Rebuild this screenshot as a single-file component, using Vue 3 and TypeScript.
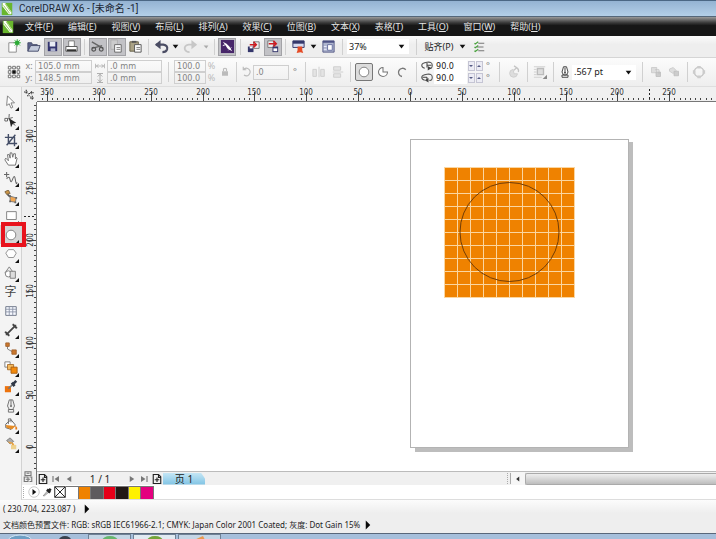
<script setup lang="ts">
import { computed, onMounted, onUnmounted, ref } from 'vue'

const icons: Record<string, string> = {
  logo: '<path d="M0 1h12v14H0z" fill="#69b62d"/><path d="M1 1l3 0 7 10v3H8L1 5z" fill="#fff"/><path d="M2 4l7 9M4 2l6 9" stroke="#8ac34a" stroke-width="1"/>',
  new: '<path d="M3 4h8v10H3z" fill="#fff" stroke="#8b8b8b"/><circle cx="12" cy="4" r="2.500" fill="#2cab35"/><path d="M12 0v8M8 4h8M9 1l6 6M15 1L9 7" stroke="#2cab35" stroke-width=".8"/>',
  open: '<path d="M2 13V4h4l1 2h5v2" fill="#5b628a" stroke="#464c6b"/><path d="M2 13l3-6h10l-2 6z" fill="#c3cadb" stroke="#464c6b"/>',
  save: '<path d="M3 3h10v10H3z" fill="#33356f"/><path d="M5 3h6v5H5z" fill="#e8ecf4"/><path d="M6 10h5v3H6z" fill="#aeb3ce"/>',
  print: '<path d="M5 2h6v7H5z" fill="#fff" stroke="#777"/><path d="M2 8h12v5H2z" fill="#fff" stroke="#555"/><path d="M3 12h10" stroke="#333" stroke-width="2"/>',
  cut: '<path d="M2 3l12 7M2 10l11-3" stroke="#666" stroke-width="1.500"/><circle cx="4" cy="11" r="2" fill="none" stroke="#555" stroke-width="1.300"/><circle cx="12" cy="11" r="2" fill="none" stroke="#555" stroke-width="1.300"/>',
  copy: '<path d="M2 1h7v10H2z" fill="#ccc" stroke="#b0b0b0"/><path d="M6 6h7v8H6z" fill="#fff" stroke="#666"/><path d="M8 9h4M8 11h4" stroke="#777"/>',
  paste: '<path d="M2 3h9v10H2z" fill="#aaa285" stroke="#666047"/><path d="M4 2h5v2H4z" fill="#555"/><path d="M7 6h7v8H7z" fill="#fff" stroke="#555"/><path d="M9 9h4M9 11h4" stroke="#777"/>',
  undo: '<path d="M2 6h8q5 1 4 5-1 3-5 3" fill="none" stroke="#4a4c63" stroke-width="2.200"/><path d="M7 1v10L1 6z" fill="#4a4c63"/>',
  redo: '<path d="M14 6H6q-5 1-4 5 1 3 5 3" fill="none" stroke="#c7c7c7" stroke-width="2"/><path d="M9 1v10l6-5z" fill="#c7c7c7"/>',
  down: '<path d="M5 6h6l-3 4z" fill="#111"/>',
  downGrey: '<path d="M6 7h5l-2 3z" fill="#aaa"/>',
  connect: '<path d="M1 1h14v14H1z" fill="#472669"/><path d="M3 3l4 2 3 3 3 5-5-3-2-3z" fill="#fff"/><path d="M3 7l3-1M9 12l3-3" stroke="#fff"/>',
  import: '<path d="M2 8h6v6H2z" fill="#34366b"/><path d="M4 8h3v2H4z" fill="#fff"/><path d="M8 3h6v7H8z" fill="#eee" stroke="#777"/><path d="M4 6h6M8 3l3 3-3 3" stroke="#cf1b21" stroke-width="1.600" fill="none"/>',
  export: '<path d="M3 2h6v7H3z" fill="#eee" stroke="#777"/><path d="M8 8h6v6H8z" fill="#34366b"/><path d="M9 10h4v3H9z" fill="#fff"/><path d="M4 5h7M9 2l3 3-3 3" stroke="#cf1b21" stroke-width="1.600" fill="none"/>',
  publish: '<path d="M2 2h12v7H2z" fill="#d6daef" stroke="#33376b"/><path d="M2 2h12v3H2z" fill="#33376b"/><path d="M7 8h5v4l1 3-3-1-4 1 1-3z" fill="#e54b25"/>',
  welcome: '<path d="M2 2h12v12H2z" fill="#aeb5ce" stroke="#565b88"/><path d="M2 3h12" stroke="#4b5083" stroke-width="2"/><path d="M7 6h5v6H7z" fill="#fff" stroke="#6970a0"/><path d="M3 8h3M3 11h3" stroke="#eef"/>',
  options: '<path d="M7 3h8M5 8h9M7 13h8" stroke="#777" stroke-width="1.400"/><path d="M2 3l1 1 4-3M2 8l1 1 4-3M2 13l1 1 4-3" fill="none" stroke="#48a23c" stroke-width="1.500"/>',
  origin: '<path d="M3 3h10v10H3z" fill="none" stroke="#777" stroke-dasharray="1 1"/><g fill="#fff" stroke="#666"><path d="M1.500 1.500h3v3h-3zM6.500 1.500h3v3h-3zM11.500 1.500h3v3h-3zM1.500 6.500h3v3h-3zM11.500 6.500h3v3h-3zM1.500 11.500h3v3h-3zM6.500 11.500h3v3h-3zM11.500 11.500h3v3h-3z"/></g><path d="M6 6h4v4H6z" fill="#111"/>',
  width: '<path d="M2 5v6M14 5v6M3 8h10M6 6L3 8l3 2M10 6l3 2-3 2" stroke="#aaa" fill="none"/>',
  height: '<path d="M4 2h8M4 14h8M8 3v10M5 6l3-3 3 3M5 10l3 3 3-3" stroke="#999" fill="none"/>',
  lock: '<path d="M4 7h8v6H4z" fill="#bbb"/><path d="M6 7V4q2-2 4 0v3" fill="none" stroke="#bbb" stroke-width="1.500"/>',
  rotate: '<path d="M4 4a5 5 0 1 1 0 8M3 1v4h4" fill="none" stroke="#bbb" stroke-width="1.500"/>',
  mirrorH: '<path d="M1 13V5h4v8zM10 13V5h4v8z" fill="#e4e4e4" stroke="#ccc"/><path d="M8 2v12" stroke="#ccc"/>',
  mirrorV: '<path d="M3 2h8v4H3zM3 10h8v4H3z" fill="#e4e4e4" stroke="#ccc"/><path d="M2 8h12" stroke="#ccc"/>',
  ellipse: '<circle cx="8" cy="8" r="5.500" fill="#fff" stroke="#777"/>',
  pie: '<path d="M8 8h6A6 6 0 1 1 8 2z" fill="#fff" stroke="#777" stroke-width="1.400"/>',
  arc: '<path d="M13 5a5.500 5.500 0 1 0-5 9" fill="none" stroke="#777" stroke-width="1.800"/>',
  angleA: '<path d="M5 11Q1 10 1 7t7-4 7 4-4 4" fill="none" stroke="#555" stroke-width="1.400"/><path d="M8 7h6M8 4v6" stroke="#444" stroke-width="1.400"/><path d="M9 8v6l5-3z" fill="#444"/>',
  angleB: '<path d="M5 11Q1 10 1 7t7-4 7 4-4 4" fill="none" stroke="#555" stroke-width="1.400"/><path d="M2 7h6M8 7v4" stroke="#444" stroke-width="1.400"/><path d="M10 8v6l-5-3z" fill="#444"/>',
  direction: '<path d="M7 5a4.500 4.500 0 1 0 5 5H8z" fill="#ddd" stroke="#ccc"/><path d="M8 1l3 2-3 3M11 3q3 2 2 5" fill="none" stroke="#c4c4c4" stroke-width="1.400"/>',
  wrap: '<path d="M1 2h13M1 5h3M1 8h3M1 11h3M1 14h9" stroke="#ccc"/><path d="M5 4h7v7H5z" fill="#ddd" stroke="#bbb" stroke-width="1.500"/><path d="M16 11v5h-5z" fill="#888"/>',
  pen: '<path d="M6 1h4l2 7-2 4H6L4 8zM4 12h8v3H4zM8 2v7" fill="#fff" stroke="#444" stroke-width="1.300"/><circle cx="8" cy="9" r="1.200" fill="#444"/>',
  front: '<path d="M2 2h7v7H2z" fill="#ddd" stroke="#c5c5c5"/><path d="M8 8h6v6H8z" fill="#ccc" stroke="#bbb"/><path d="M7 5h5v6" stroke="#bbb" fill="none"/>',
  back: '<path d="M2 4l5-2 4 4-4 4-5-3z" fill="#ddd" stroke="#c5c5c5"/><path d="M8 7h6v6H8z" fill="#ccc" stroke="#bbb"/>',
  curves: '<circle cx="8" cy="8" r="5.500" fill="none" stroke="#c4c4c4" stroke-width="1.500"/><path d="M6 1h4v3H6zM6 12h4v3H6zM1 6h3v4H1zM12 6h3v4h-3z" fill="#ccc"/>',
  pick: '<path d="M4 1l8 8-4 0 2 5-2 1-2-5-3 2z" fill="#fff" stroke="#777"/>',
  shape: '<path d="M6 0q-2 8 7 13M3 6l7-2" fill="none" stroke="#555"/><path d="M6 5l8 5-4 1-2 4z" fill="#222"/><path d="M1 5h3v3H1z" fill="#fff" stroke="#555"/>',
  crop: '<path d="M5 1v11h10M1 5h11v10M3 14L13 2" fill="none" stroke="#444e67" stroke-width="1.600"/>',
  hand: '<path d="M5 15L1 9l1-2 3 3-1-7 2 0 1 4V1h2l1 5 1-4h2v6l1-2 1 1-2 8z" fill="#fff" stroke="#666"/>',
  freehand: '<path d="M3 1v6M0 4h6M3 9q3-4 4 1t3-1 3 1 2 3" fill="none" stroke="#666" stroke-width="1.200"/>',
  smart: '<path d="M1 2l4-2 2 4-4 1z" fill="#c99346" stroke="#79623f"/><path d="M4 5l3 3" stroke="#555" stroke-width="2"/><path d="M7 7l7 2-1 5-6-1z" fill="#f0a550" stroke="#777"/><path d="M6 6h2v2H6zM13 8h2v2h-2zM12 13h2v2h-2zM6 12h2v2H6z" fill="#666"/>',
  rectangle: '<path d="M3 3h11v9H3z" fill="#fff" stroke="#777"/>',
  polygon: '<path d="M5 3h6l3 4-3 5H5L2 7z" fill="#fff" stroke="#888"/>',
  basic: '<path d="M6 1l5 7H1z" fill="#eee" stroke="#777"/><circle cx="5" cy="9" r="3.500" fill="#fff" stroke="#777"/><path d="M7 6h6v8H7z" fill="#ddd" stroke="#777"/>',
  table: '<path d="M2 3h12v10H2z" fill="#f7f9ff" stroke="#666e80"/><path d="M6 3v10M10 3v10M2 6h12M2 9h12" stroke="#8c94a7"/>',
  dimension: '<path d="M3 13L13 3" stroke="#444" stroke-width="2"/><path d="M1 10l5 5M10 1l5 5" stroke="#444" stroke-width="1.500"/><path d="M2 14v-5l5 5zM14 2v5L9 2z" fill="#444"/>',
  connector: '<path d="M4 4v4l7 4" fill="none" stroke="#777"/><path d="M2 1h4v4H2zM9 9h5v5H9z" fill="#ca772c" stroke="#a0622f"/>',
  blend: '<path d="M1 1h6v6H1z" fill="#fff" stroke="#777"/><path d="M4 4h7v6H4z" fill="#f4bb60" stroke="#a76c29"/><path d="M8 7h7v7H8z" fill="#f28a0c" stroke="#a55b13"/>',
  dropper: '<path d="M1 7h7v7H1z" fill="#ed730d"/><path d="M5 10l6-6" stroke="#777" stroke-width="2"/><path d="M9 3l3 4M10 5l4-4" stroke="#303846" stroke-width="3"/>',
  outline: '<path d="M6 1h4l2 7-2 4H6L4 8zM5 12h6v3H5zM8 1v7" fill="#eee" stroke="#666"/><circle cx="8" cy="8" r="1" fill="#555"/>',
  fill: '<path d="M2 7l6-5 5 6-5 5-6-2z" fill="#fff" stroke="#555"/><path d="M2 8l11 1-4 4-6-2z" fill="#e58c25"/><path d="M5 7V1h3v4" stroke="#666" fill="none"/><path d="M13 8l2 3v2h-2z" fill="#e87911"/>',
  interactive: '<path d="M3 4l4-3 4 4-4 3z" fill="#aaa" stroke="#777"/><path d="M4 5l6 1-3 2z" fill="#e6a44b"/><path d="M8 9h6v5H8z" fill="#eed18e"/><path d="M9 7l2 2" stroke="#eb9d32" stroke-width="2"/>',
  addPage: '<path d="M3 2h7l3 3v9H3zM10 2v4h3M8 6v6M5 9h6" fill="none" stroke="#222" stroke-width="1.500"/>',
  first: '<path d="M4 4v8" stroke="#777" stroke-width="1.500"/><path d="M12 4L6 8l6 4z" fill="#777"/>',
  prev: '<path d="M11 4L5 8l6 4z" fill="#777"/>',
  scrollLeft: '<path d="M10 4L5 8l5 4z" fill="#333"/>',
  next: '<path d="M5 4l6 4-6 4z" fill="#777"/>',
  last: '<path d="M12 4v8" stroke="#777" stroke-width="1.500"/><path d="M4 4l6 4-6 4z" fill="#777"/>',
  play: '<path d="M5 2l6 6-6 6z" fill="#080808"/>',
  round: '<circle cx="8" cy="8" r="7" fill="#fff" stroke="#bbb"/><path d="M6 4l5 4-5 4z" fill="#111"/>',
  eyedrop: '<path d="M2 14l7-8 2 2-7 6z" fill="#ddd" stroke="#666"/><path d="M8 4l5 5M11 6l3-3" stroke="#222" stroke-width="4"/>',
  none: '<path d="M1 1h14v14H1zM1 1l14 14M15 1L1 15" fill="#fff" stroke="#222" stroke-width="1.300"/>',
  guides: '<path d="M3 1v6M0 4h6M6 6h3M10 3v4M8 5h5M4 9h3M11 9v6M8 12h6" stroke="#333" stroke-width="1.500" stroke-dasharray="2 1"/><path d="M5 6l5 6" stroke="#666"/>',
  flag: '<path d="M4 1h8v5H4zM3 8h5v6H3zM10 8h3v6h-3M6 3h4M5 11h6" fill="none" stroke="#777" stroke-width="1.500"/>',
}

const menus = [
  ['文件', 'F'], ['编辑', 'E'], ['视图', 'V'], ['布局', 'L'], ['排列', 'A'], ['效果', 'C'],
  ['位图', 'B'], ['文本', 'X'], ['表格', 'T'], ['工具', 'O'], ['窗口', 'W'], ['帮助', 'H'],
]

interface Item { icon?: string; label?: string; on?: boolean }
const standard: Item[] = [
  { icon: 'new', label: '新建' }, { icon: 'open', label: '打开' },
  { icon: 'save', label: '保存', on: true }, { icon: 'print', label: '打印', on: true }, {},
  { icon: 'cut', label: '剪切', on: true }, { icon: 'copy', label: '复制', on: true },
  { icon: 'paste', label: '粘贴' }, {},
  { icon: 'undo', label: '撤消' }, { icon: 'down', label: '撤消列表' },
  { icon: 'redo', label: '重做' }, { icon: 'downGrey', label: '重做列表' }, {},
  { icon: 'connect', label: '搜索内容', on: true }, {},
  { icon: 'import', label: '导入' }, { icon: 'export', label: '导出', on: true }, {},
  { icon: 'publish', label: '应用程序启动器' }, { icon: 'down', label: '启动器列表' },
  { icon: 'welcome', label: '欢迎屏幕' }, {},
]

const tools = [
  'pick', 'shape', 'crop', 'hand', 'freehand', 'smart', 'rectangle', 'ellipse', 'polygon', 'basic',
  'text', 'table', 'dimension', 'connector', 'blend', 'dropper', 'outline', 'fill', 'interactive',
]
const plainTools = ['text', 'table']
const activeTool = ref('ellipse')

const swatches = ['#ffffff', '#ef8200', '#5e5b5e', '#e60019', '#221815', '#fff100', '#e4007f']

const zoom = ref('37%')
const outlineWidth = ref('.567 pt')

// Screen pixels per millimetre at the current zoom level
const scale = 1.037
const zeroX = 373
const zeroY = 345

const hRuler = ref<SVGSVGElement>()
const vRuler = ref<SVGSVGElement>()
const hLength = ref(0)
const vLength = ref(0)

function measure() {
  hLength.value = hRuler.value?.getBoundingClientRect().width ?? 0
  vLength.value = vRuler.value?.getBoundingClientRect().height ?? 0
}
onMounted(() => {
  measure()
  window.addEventListener('resize', measure)
})
onUnmounted(() => window.removeEventListener('resize', measure))

// A mark every 5 mm, with a label every 50 mm where it has room
function ticks(zero: number, direction: number, length: number) {
  const list: { mm: number; pos: number; major: boolean; label: boolean }[] = []
  for (let mm = -1500; mm <= 2500; mm += 5) {
    const pos = Math.round(zero + direction * mm * scale)
    if (pos < 1 || pos > length) continue
    const major = mm % 50 === 0
    list.push({ mm, pos, major, label: major && pos > 8 && pos < length - 8 })
  }
  return list
}
const hTicks = computed(() => ticks(zeroX, 1, hLength.value))
const vTicks = computed(() => ticks(zeroY, -1, vLength.value))
const gridLines = Array.from({ length: 11 }, (_, i) => i * 13)
</script>

<template>
  <div class="app">
    <header class="title">
      <svg class="logo" viewBox="0 0 12 16" v-html="icons.logo"></svg>
      <span>CorelDRAW X6 - [未命名 -1]</span>
    </header>

    <nav class="menu">
      <svg class="logo" viewBox="0 0 12 16" v-html="icons.logo"></svg>
      <button v-for="m in menus" :key="m[1]">{{ m[0] }}(<u>{{ m[1] }}</u>)</button>
    </nav>

    <div class="standard">
      <template v-for="(item, i) in standard" :key="i">
        <button v-if="item.icon" class="tb" :class="{ on: item.on }" :aria-label="item.label">
          <svg class="i15" viewBox="0 0 16 16" v-html="icons[item.icon]"></svg>
        </button>
        <i v-else class="sep"></i>
      </template>
      <div class="combo">
        <select v-model="zoom" aria-label="缩放级别"><option>37%</option><option>100%</option></select>
        <svg class="i15 caret" viewBox="0 0 16 16" v-html="icons.down"></svg>
      </div>
      <i class="sep"></i>
      <button class="tb snap">贴齐(P)</button>
      <button class="tb" aria-label="贴齐列表"><svg class="i15" viewBox="0 0 16 16" v-html="icons.down"></svg></button>
      <button class="tb" aria-label="选项"><svg class="i12" viewBox="0 0 16 16" v-html="icons.options"></svg></button>
    </div>

    <div class="props">
      <svg class="i14" viewBox="0 0 16 16" v-html="icons.origin"></svg>
      <div class="pair dim"><label for="px">x:</label><label for="py">y:</label></div>
      <div class="pair dim"><input id="px" value="105.0 mm"><input id="py" value="148.5 mm"></div>
      <div class="pair">
        <svg class="i12" viewBox="0 0 16 16" v-html="icons.width"></svg>
        <svg class="i12" viewBox="0 0 16 16" v-html="icons.height"></svg>
      </div>
      <div class="pair dim"><input value=".0 mm" aria-label="宽度"><input value=".0 mm" aria-label="高度"></div>
      <i class="sep"></i>
      <div class="pair dim"><input value="100.0" aria-label="水平缩放"><input value="100.0" aria-label="垂直缩放"></div>
      <div class="pair faint"><span>%</span><span>%</span></div>
      <button class="tb" aria-label="锁定比率"><svg class="i12" viewBox="0 0 16 16" v-html="icons.lock"></svg></button>
      <i class="sep"></i>
      <svg class="i12" viewBox="0 0 16 16" v-html="icons.rotate"></svg>
      <div class="single dim"><input value=".0" aria-label="旋转角度"></div>
      <span class="degree">°</span>
      <i class="sep"></i>
      <button class="tb" aria-label="水平镜像"><svg class="i14" viewBox="0 0 16 16" v-html="icons.mirrorH"></svg></button>
      <button class="tb" aria-label="垂直镜像"><svg class="i14" viewBox="0 0 16 16" v-html="icons.mirrorV"></svg></button>
      <i class="sep"></i>
      <button class="tb on ring" aria-label="椭圆形"><svg class="i14" viewBox="0 0 16 16" v-html="icons.ellipse"></svg></button>
      <button class="tb" aria-label="饼图"><svg class="i12" viewBox="0 0 16 16" v-html="icons.pie"></svg></button>
      <button class="tb" aria-label="弧"><svg class="i12" viewBox="0 0 16 16" v-html="icons.arc"></svg></button>
      <i class="sep"></i>
      <div class="pair">
        <svg class="i12" viewBox="0 0 16 16" v-html="icons.angleA"></svg>
        <svg class="i12" viewBox="0 0 16 16" v-html="icons.angleB"></svg>
      </div>
      <div class="pair open"><input value="90.0" aria-label="起始角度"><input value="90.0" aria-label="结束角度"></div>
      <div class="spins">
        <button v-for="n in 4" :key="n" :class="{ up: n % 2 === 0 }" aria-label="微调"></button>
      </div>
      <div class="pair degree"><span>°</span><span>°</span></div>
      <i class="sep"></i>
      <button class="tb" aria-label="更改方向"><svg class="i14" viewBox="0 0 16 16" v-html="icons.direction"></svg></button>
      <i class="sep"></i>
      <button class="tb" aria-label="文本换行"><svg class="i14" viewBox="0 0 16 16" v-html="icons.wrap"></svg></button>
      <i class="sep"></i>
      <svg class="i12" viewBox="0 0 16 16" v-html="icons.pen"></svg>
      <div class="combo">
        <select v-model="outlineWidth" aria-label="轮廓宽度"><option>.567 pt</option><option>1.0 pt</option></select>
        <svg class="i15 caret" viewBox="0 0 16 16" v-html="icons.down"></svg>
      </div>
      <i class="sep"></i>
      <button class="tb" aria-label="到图层前面"><svg class="i12" viewBox="0 0 16 16" v-html="icons.front"></svg></button>
      <button class="tb" aria-label="到图层后面"><svg class="i12" viewBox="0 0 16 16" v-html="icons.back"></svg></button>
      <i class="sep"></i>
      <button class="tb" aria-label="转换为曲线"><svg class="i14" viewBox="0 0 16 16" v-html="icons.curves"></svg></button>
    </div>

    <main class="work">
      <aside class="toolbox">
        <button
          v-for="t in tools" :key="t" class="tool" :aria-label="t"
          :class="{ active: t === activeTool }" @click="activeTool = t"
        >
          <span v-if="t === 'text'" class="glyph">字</span>
          <svg v-else class="i14" viewBox="0 0 16 16" v-html="icons[t]"></svg>
          <i v-if="!plainTools.includes(t)" class="flyout"></i>
          <i v-if="t === activeTool" class="mark"></i>
        </button>
      </aside>

      <section class="document">
        <div class="corner"><svg class="i12" viewBox="0 0 16 16" v-html="icons.guides"></svg></div>
        <svg ref="hRuler" class="hruler">
          <g v-for="t in hTicks" :key="t.mm">
            <rect :x="t.pos" :y="t.major ? 5 : 11" width="1" :height="t.major ? 9 : 2" fill="#444" />
            <text v-if="t.label" :x="t.pos" y="8" text-anchor="middle">{{ Math.abs(t.mm) }}</text>
          </g>
          <path d="M612.500 2v12" stroke="#222" stroke-dasharray="2 2" />
        </svg>
        <div class="vbar">
          <svg ref="vRuler" class="vruler">
            <g v-for="t in vTicks" :key="t.mm">
              <rect :x="t.major ? 5 : 12" :y="t.pos" :width="t.major ? 9 : 2" height="1" fill="#444" />
              <text
                v-if="t.label" text-anchor="middle"
                :transform="`translate(11 ${t.pos}) rotate(-90)`"
              >{{ Math.abs(t.mm) }}</text>
            </g>
            <path d="M2 114.500h12" stroke="#222" stroke-dasharray="2 2" />
          </svg>
          <svg class="i12" viewBox="0 0 16 16" v-html="icons.flag"></svg>
        </div>
        <svg class="canvas">
          <rect x="378" y="40" width="218" height="310" fill="#bdbdbd" />
          <rect x="373.500" y="37.500" width="218" height="308" fill="#fff" stroke="#b3b3b3" />
          <g transform="translate(407 65)">
            <rect width="131" height="131" fill="#ef8200" />
            <path v-for="g in gridLines" :key="g" :d="`M${g}.5 0v131M0 ${g}.5h131`" stroke="#fbd6a0" />
            <circle cx="65.500" cy="65" r="49.500" fill="none" stroke="#713d08" />
          </g>
        </svg>
        <div class="pager">
          <button class="tb" aria-label="前面添加页"><svg class="i12" viewBox="0 0 16 16" v-html="icons.addPage"></svg></button>
          <button class="tb" aria-label="第一页"><svg class="i12" viewBox="0 0 16 16" v-html="icons.first"></svg></button>
          <button class="tb" aria-label="上一页"><svg class="i12" viewBox="0 0 16 16" v-html="icons.prev"></svg></button>
          <span class="count">1 / 1</span>
          <button class="tb" aria-label="下一页"><svg class="i12" viewBox="0 0 16 16" v-html="icons.next"></svg></button>
          <button class="tb" aria-label="最后一页"><svg class="i12" viewBox="0 0 16 16" v-html="icons.last"></svg></button>
          <button class="tb" aria-label="后面添加页"><svg class="i12" viewBox="0 0 16 16" v-html="icons.addPage"></svg></button>
          <button class="tab">页 1</button>
          <i class="grip"></i>
          <button class="tb scroll" aria-label="向左滚动"><svg class="i10" viewBox="0 0 16 16" v-html="icons.scrollLeft"></svg></button>
          <div class="thumb"></div>
        </div>
        <div class="palette">
          <i class="grip"></i>
          <button class="tb" aria-label="调色板菜单"><svg class="i12" viewBox="0 0 16 16" v-html="icons.round"></svg></button>
          <button class="tb" aria-label="滴管"><svg class="i10" viewBox="0 0 16 16" v-html="icons.eyedrop"></svg></button>
          <button class="tb" aria-label="无颜色"><svg class="i12" viewBox="0 0 16 16" v-html="icons.none"></svg></button>
          <div class="swatches">
            <button v-for="c in swatches" :key="c" :aria-label="c" :style="{ background: c }"></button>
          </div>
        </div>
      </section>
    </main>

    <footer class="status">
      <p class="coords">( 230.704, 223.087 )<svg class="i12" viewBox="0 0 16 16" v-html="icons.play"></svg></p>
      <p>文档颜色预置文件: RGB: sRGB IEC61966-2.1; CMYK: Japan Color 2001 Coated; 灰度: Dot Gain 15%<svg class="i12" viewBox="0 0 16 16" v-html="icons.play"></svg></p>
    </footer>

    <div class="taskbar">
      <svg class="orb" viewBox="0 0 80 5"><ellipse cx="20" cy="7" rx="12" ry="6" fill="#6f9fc4" stroke="#d4e6f3" /><ellipse cx="65" cy="6" rx="6" ry="4" fill="#39424e" /></svg>
      <i class="task"><svg class="peek" viewBox="0 0 20 5"><ellipse cx="10" cy="6" rx="8" ry="5" fill="#67b56d" /></svg></i>
      <i class="task lit"><svg class="peek" viewBox="0 0 20 5"><ellipse cx="10" cy="6" rx="8" ry="5" fill="#74a43a" /></svg></i>
      <i class="task"><svg class="peek" viewBox="0 0 20 5"><path d="M4 5l9-4 2 4z" fill="#e99a4f" /></svg></i>
    </div>
  </div>
</template>

<style>
body {
  margin: 0;
}
</style>

<style scoped>
.app {
  display: flex;
  flex-direction: column;
  min-height: 100vh;
  overflow: hidden;
  background: #f0f0f0;
  color: #222;
  font: 9px/12px "Noto Sans", "Noto Sans CJK SC", sans-serif;
}
.app * {
  box-sizing: border-box;
}
svg {
  display: block;
  flex: none;
}
button {
  padding: 0;
  border: 0;
  background: none;
  color: inherit;
  font: inherit;
}
.i15 { width: 15px; height: 15px; }
.i14 { width: 14px; height: 14px; }
.i12 { width: 12px; height: 12px; }
.i10 { width: 10px; height: 10px; }
.logo { width: 12px; height: 14px; }

.title {
  display: flex;
  align-items: center;
  gap: 6px;
  height: 17px;
  padding-left: 1px;
  border-top: 1px solid #4b6784;
  border-bottom: 1px solid #55677a;
  background: linear-gradient(#94b3d2, #b4cfe8);
  color: #1c2836;
  font-family: Roboto, "Noto Sans CJK SC", sans-serif;
  font-size: 10px;
}
.menu {
  display: flex;
  align-items: center;
  gap: 15px;
  height: 19px;
  padding-left: 2px;
  background: linear-gradient(#9a9a9a, #3a3a3a 30%, #161616 45%, #161616);
  color: #e4e4e4;
  white-space: nowrap;
}
.menu .logo { margin-right: -4px; }

.standard {
  display: grid;
  grid-template-columns:
    20px 20px 19px 19px 7px 19px 19px 18px 8px 18px 11px 18px 12px 7px 18px 8px
    19px 19px 6px 20px 10px 20px 9px 62px 14px 32px 14px 20px;
  align-items: center;
  justify-items: center;
  height: 22px;
  padding-left: 3px;
  border-bottom: 1px solid #d5d5d5;
  background: linear-gradient(#fbfbfb, #eeeeee 40%);
}
.tb {
  display: flex;
  align-items: center;
  justify-content: center;
  white-space: nowrap;
}
.tb.on {
  width: 18px;
  height: 18px;
  border: 1px solid #a2a2a6;
  background: #c2c2c6;
}
.tb.ring {
  border-color: #777;
  border-radius: 2px;
  background: #dcdcdc;
}
.sep {
  width: 1px;
  height: 16px;
  background: #d0d0d0;
}
.combo {
  position: relative;
  width: 100%;
}
.combo select {
  display: block;
  width: 100%;
  height: 15px;
  padding: 0 2px;
  border: 0;
  appearance: none;
  background: #fff;
  color: #222;
  font: inherit;
}
.combo .caret {
  position: absolute;
  top: 0;
  right: 0;
  pointer-events: none;
}

.props {
  display: grid;
  grid-template-columns:
    18px 12px 57px 15px 55px 12px 32px 11px 15px 9px
    12px 36px 12px 9px 18px 19px 7px 19px 19px 20px 8px
    14px 33px 16px 10px 12px 18px 8px 18px 8px 15px 64px
    12px 16px 20px 6px 18px;
  align-items: center;
  justify-items: center;
  height: 29px;
  padding-left: 5px;
  border-bottom: 1px solid #dedede;
  background: linear-gradient(#fcfcfc, #eeeeee);
}
.props .sep { height: 20px; }
.pair {
  display: grid;
  grid-template-rows: 12px 12px;
  align-items: center;
  justify-items: center;
  width: 100%;
}
.pair input,
.single input {
  width: 100%;
  height: 12px;
  padding: 0 2px;
  border: 1px solid #cfcfcf;
  background: transparent;
  color: inherit;
  font: 9px/10px "DejaVu Sans Condensed", "Noto Sans", sans-serif;
}
.single { width: 100%; }
.single input { height: 15px; }
.dim { color: #838383; }
.faint { color: #bbb; }
.degree { color: #777; }
.pair label,
.pair span { line-height: 10px; }
.open input {
  padding: 0 1px;
  border-color: #fff;
  background: #fff;
  color: #222;
}
.spins {
  display: grid;
  grid-template: 10px 10px / 7px 7px;
  gap: 2px 1px;
}
.spins button {
  display: grid;
  place-items: center;
  border: 1px solid #c5c5d4;
  background: #ececf4;
}
.spins button::after {
  content: "";
  border: 2px solid transparent;
  border-top-color: #555a83;
  border-bottom-width: 0;
}
.spins .up::after {
  border-top-width: 0;
  border-bottom: 2px solid #555a83;
}

.work {
  display: grid;
  grid-template-columns: 22px 1fr;
  flex: 1;
}
.toolbox {
  display: flex;
  flex-direction: column;
  padding-top: 5px;
  border-right: 1px solid #d2d2d2;
  background: #f4f4f4;
}
.tool {
  position: relative;
  display: grid;
  place-items: center;
  width: 21px;
  height: 19px;
}
.glyph {
  color: #444;
  font-size: 12px;
}
.flyout {
  position: absolute;
  right: 2px;
  bottom: 0;
  border: 2px solid #111;
  border-top-color: transparent;
  border-left-color: transparent;
}
.tool.active { background: #d5d5d5; }
.mark {
  position: absolute;
  z-index: 1;
  inset: -3px -5px -3px 1px;
  border: 4px solid #e8131d;
}

.document {
  display: grid;
  grid-template: 15px 1fr 14px 15px / 15px 1fr;
  min-width: 0;
}
.corner {
  display: grid;
  place-items: center;
}
.hruler {
  width: 100%;
  height: 15px;
  border-bottom: 1px solid #777;
  overflow: hidden;
}
.hruler text,
.vruler text {
  fill: #333;
  font: 8px "DejaVu Sans Condensed", "Noto Sans", sans-serif;
}
.vbar {
  display: grid;
  grid-row: 2 / 4;
  grid-template-rows: 1fr 14px;
  border-right: 1px solid #777;
}
.vruler {
  width: 14px;
  height: 100%;
  overflow: hidden;
}
.canvas {
  width: 100%;
  height: 100%;
  background: #fff;
  overflow: hidden;
}
.pager {
  display: grid;
  grid-template-columns: 12px 13px 13px 50px 13px 12px 13px 42px minmax(12px, 306px) 14px minmax(190px, 1fr);
  align-items: center;
  border-top: 1px solid #bbb;
}
.count {
  text-align: center;
  font-size: 10px;
}
.tab {
  height: 12px;
  background: linear-gradient(#c4e6f5, #7fc3e4);
  clip-path: polygon(0 0, 90% 0, 100% 50%, 100% 100%, 0 100%);
  font-size: 10px;
}
.grip {
  justify-self: end;
  width: 4px;
  height: 11px;
  border-right: 1px solid #aaa;
  border-left: 1px dotted #aaa;
}
.scroll {
  height: 13px;
  background: #f6f6f6;
}
.thumb {
  height: 12px;
  border: 1px solid #aaa;
  border-right: 0;
  border-radius: 2px 0 0 2px;
  background: linear-gradient(#eeeeee, #d9d9d9 45%, #bdbdbd);
}
.palette {
  display: grid;
  grid-column: 1 / 3;
  grid-template-columns: 5px 13px 13px 13px 88px;
  align-items: center;
  border-bottom: 1px solid #ddd;
  background: #fff;
}
.palette .grip { border-right: 0; }
.swatches {
  display: grid;
  grid-template-columns: repeat(7, 1fr);
  height: 13px;
}
.swatches button {
  border: 1px solid #777;
  border-width: 1px 1px 0 0;
}

.status {
  height: 33px;
  padding: 1px 3px 0;
  background: linear-gradient(#fcfcfc, #eeeeee 40%);
  font-size: 8px;
}
.status p {
  display: flex;
  align-items: center;
  gap: 2px;
  height: 16px;
  margin: 0;
  white-space: nowrap;
}
.status .coords { gap: 6px; }

.taskbar {
  display: flex;
  gap: 2px;
  height: 6px;
  border-top: 1px solid #59677a;
  background: #a6bfdb;
}
.orb {
  width: 80px;
  height: 5px;
  margin-right: 6px;
}
.task {
  display: grid;
  place-items: center;
  width: 43px;
  border: 1px solid #6f8296;
  border-bottom: 0;
  background: #c5d6e6;
}
.task.lit { background: #e2ebf2; }
.peek {
  width: 20px;
  height: 5px;
}
</style>
